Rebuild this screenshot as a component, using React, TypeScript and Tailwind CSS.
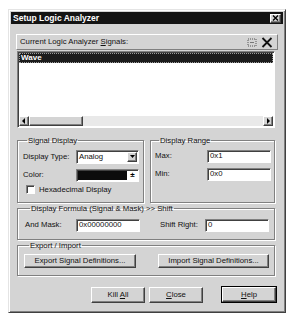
import React from "react";

const sunken =
  "border border-t-[#808080] border-l-[#808080] border-b-white border-r-white shadow-[inset_1px_1px_0_#404040]";
const raised =
  "border border-t-white border-l-white border-b-[#404040] border-r-[#404040] shadow-[inset_-1px_-1px_0_#808080]";
const etched =
  "border border-[#808080] shadow-[1px_1px_0_#ffffff,inset_1px_1px_0_#ffffff]";
const txt = "text-[7.75px] leading-none whitespace-nowrap text-[#111]";

function Field({ w, text }: { w: string; text: string }) {
  return (
    <div className={`${sunken} ${w} h-[13px] bg-white flex items-center pl-[2px] ${txt}`}>
      {text}
    </div>
  );
}

function Btn({ children, w, extra = "" }: { children: React.ReactNode; w: string; extra?: string }) {
  return (
    <div className={`${raised} ${w} flex items-center justify-center ${txt} ${extra}`}>
      {children}
    </div>
  );
}

export default function App() {
  return (
    <div
      className="w-[291px] h-[333px] bg-white pt-[9px] pl-[8px]"
      style={{ fontFamily: '"Liberation Sans", Arial, sans-serif' }}
    >
      <div className="w-[278px] h-[304px] bg-[#d4d4d4] border border-t-[#e4e4e4] border-l-[#e4e4e4] border-b-[#404040] border-r-[#404040] shadow-[inset_1px_1px_0_#ffffff,inset_-1px_-1px_0_#808080] p-[1px] flex flex-col">
        {/* title bar */}
        <div className="mx-[1px] mt-[1px] h-[12px] bg-[#141414] flex items-center justify-between pl-[2px] pr-[2px]">
          <span className="text-white font-bold text-[8.5px] leading-none whitespace-nowrap">Setup Logic Analyzer</span>
          <div className={`${raised} w-[11px] h-[9px] bg-[#d4d4d4] flex items-center justify-center`}>
            <svg width="7" height="6" viewBox="0 0 7 6">
              <path d="M1 0.5 L6 5.5 M6 0.5 L1 5.5" stroke="#000" strokeWidth="1.4" />
            </svg>
          </div>
        </div>

        <div className="flex flex-col pl-[6px] pr-[6px]">
          {/* header */}
          <div className="mt-[10px] h-[16px] border border-t-white border-l-white border-b-[#808080] border-r-[#808080] flex items-center justify-between pl-[3px] pr-[4px]">
            <span className={txt}>
              Current Logic Analyzer <span className="underline">S</span>ignals:
            </span>
            <div className="flex items-center gap-[4px]">
              <svg width="10" height="9" viewBox="0 0 10 9">
                <rect x="1" y="1" width="8" height="7" fill="none" stroke="#555" strokeWidth="1" strokeDasharray="1 1" />
                <path d="M3 4.5 H7" stroke="#777" />
              </svg>
              <svg width="12" height="11" viewBox="0 0 12 11">
                <path d="M1.5 1 L10.5 10 M10.5 1 L1.5 10" stroke="#111" strokeWidth="1.8" />
              </svg>
            </div>
          </div>

          {/* list */}
          <div className={`${sunken} mt-[1px] ml-[1px] w-[258px] h-[77px] bg-white flex flex-col`}>
            <div className="mx-[1px] mt-[1px] h-[10px] bg-[#1c1c1c] border border-dotted border-[#9a9a9a] flex items-center pl-[1px]">
              <span className="text-white text-[8px] font-bold leading-none">Wave</span>
            </div>
            <div className="flex-1" />
            <div className="mx-[1px] mb-[1px] h-[10px] flex">
              <div className={`${raised} w-[10px] h-[10px] bg-[#d4d4d4] flex items-center justify-center`}>
                <svg width="4" height="6" viewBox="0 0 4 6"><path d="M3 0 L0 3 L3 6 Z" fill="#000" /></svg>
              </div>
              <div className={`${raised} w-[54px] h-[10px] bg-[#d4d4d4]`} />
              <div className="flex-1 h-[10px] bg-[#e9e9e9]" />
              <div className={`${raised} w-[10px] h-[10px] bg-[#d4d4d4] flex items-center justify-center`}>
                <svg width="4" height="6" viewBox="0 0 4 6"><path d="M1 0 L4 3 L1 6 Z" fill="#000" /></svg>
              </div>
            </div>
          </div>

          {/* groups row */}
          <div className="mt-[9px] ml-[1px] w-[258px] flex gap-[6px]">
            <fieldset className={`${etched} w-[127px] h-[66px] pl-[5px] pt-[5px]`}>
              <legend className={`ml-[4px] px-[1px] ${txt} leading-[10px]`}>Signal Display</legend>
              <div className="flex items-center h-[14px]">
                <span className={`w-[53px] ${txt}`}>Display Type:</span>
                <div className={`${sunken} w-[63px] h-[14px] bg-white flex items-center justify-between pl-[2px] pr-[1px]`}>
                  <span className={txt}>Analog</span>
                  <div className={`${raised} w-[10px] h-[10px] bg-[#d4d4d4] flex items-center justify-center`}>
                    <svg width="5" height="3" viewBox="0 0 5 3"><path d="M0 0 H5 L2.5 3 Z" fill="#000" /></svg>
                  </div>
                </div>
              </div>
              <div className="flex items-center h-[13px] mt-[5px]">
                <span className={`w-[53px] ${txt}`}>Color:</span>
                <div className={`${sunken} w-[63px] h-[13px] bg-white flex items-center pl-[1px] pr-[1px] gap-[1px]`}>
                  <div className="flex-1 h-[9px] bg-[#0c0c0c]" />
                  <div className="w-[9px] h-[9px] flex items-center justify-center text-[8px] leading-none font-bold">±</div>
                </div>
              </div>
              <div className="flex items-center h-[10px] mt-[3px] ml-[3px] gap-[4px]">
                <div className={`${sunken} w-[9px] h-[9px] bg-white`} />
                <span className={txt}>Hexadecimal Display</span>
              </div>
            </fieldset>

            <fieldset className={`${etched} w-[125px] h-[66px] pl-[4px] pt-[5px]`}>
              <legend className={`ml-[4px] px-[1px] ${txt} leading-[10px]`}>Display Range</legend>
              <div className="flex items-center">
                <span className={`w-[52px] ${txt}`}>Max:</span>
                <Field w="w-[64px]" text="0x1" />
              </div>
              <div className="flex items-center mt-[5px]">
                <span className={`w-[52px] ${txt}`}>Min:</span>
                <Field w="w-[64px]" text="0x0" />
              </div>
            </fieldset>
          </div>

          {/* display formula */}
          <fieldset className={`${etched} mt-[2px] ml-[1px] w-[258px] h-[35px] pl-[7px] pt-[6px]`}>
            <legend className={`ml-[5px] px-[1px] ${txt} leading-[10px]`}>Display Formula (Signal &amp; Mask) &gt;&gt; Shift</legend>
            <div className="flex items-center">
              <span className={`w-[51px] ${txt}`}>And Mask:</span>
              <Field w="w-[64px]" text="0x00000000" />
              <span className={`ml-[20px] w-[45px] ${txt}`}>Shift Right:</span>
              <Field w="w-[64px]" text="0" />
            </div>
          </fieldset>

          {/* export / import */}
          <fieldset className={`${etched} mt-[2px] ml-[1px] w-[258px] h-[34px] pl-[6px] pt-[4px]`}>
            <legend className={`ml-[5px] px-[1px] ${txt} leading-[10px]`}>Export / Import</legend>
            <div className="flex items-center gap-[22px]">
              <Btn w="w-[112px] h-[14px]">Export Signal Definitions...</Btn>
              <Btn w="w-[111px] h-[14px]">Import Signal Definitions...</Btn>
            </div>
          </fieldset>

          {/* bottom buttons */}
          <div className="mt-[10px] flex items-center">
            <div className="ml-[75px]">
              <Btn w="w-[54px] h-[16px]">
                Kill <span className="underline ml-[2px]">A</span>ll
              </Btn>
            </div>
            <div className="ml-[4px]">
              <Btn w="w-[54px] h-[16px]">
                <span className="underline">C</span>lose
              </Btn>
            </div>
            <div className="ml-[18px] border border-black">
              <Btn w="w-[54px] h-[15px]">
                <span className="underline">H</span>elp
              </Btn>
            </div>
          </div>
        </div>
      </div>
    </div>
  );
}
